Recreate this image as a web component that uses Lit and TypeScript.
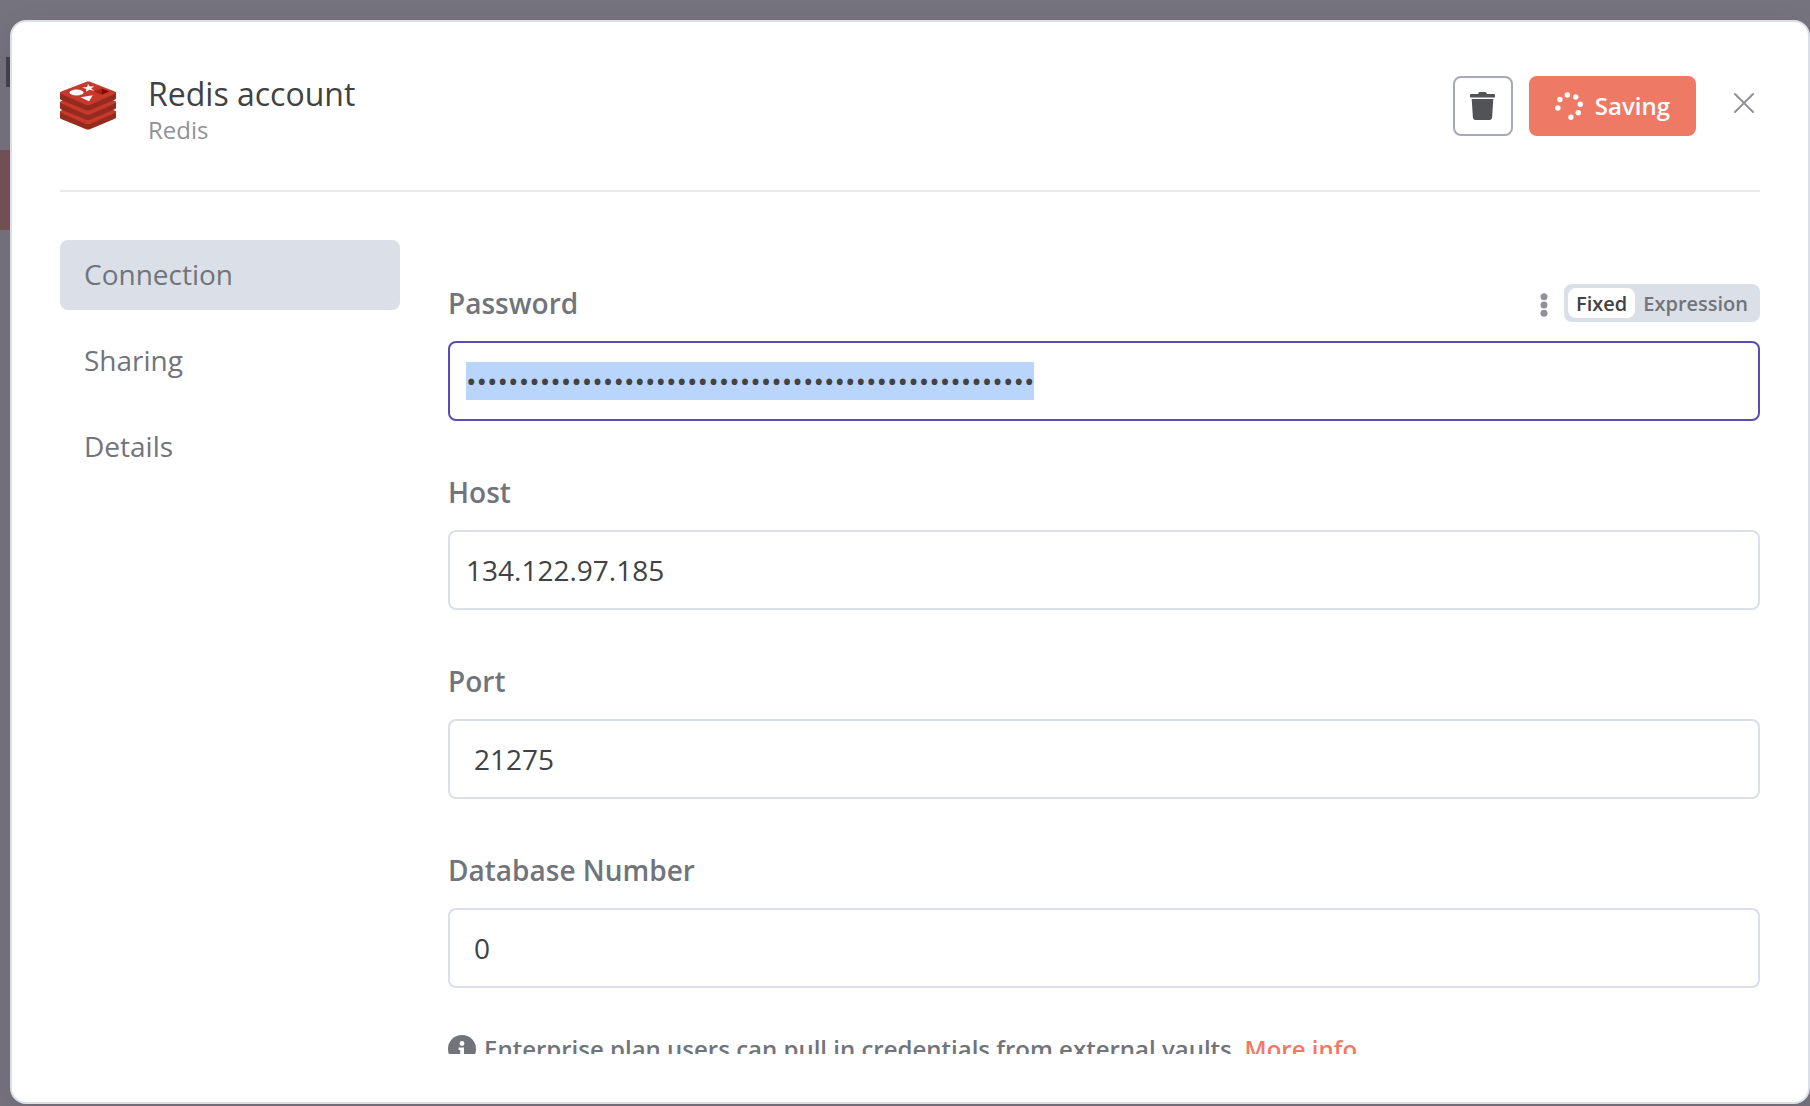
import { LitElement, html, css, svg } from "lit";
import { customElement, state, query } from "lit/decorators.js";

interface Field {
  id: string;
  label: string;
  type: string;
  value: string;
}

const MENU = ["Connection", "Sharing", "Details"];

const FIELDS: Field[] = [
  { id: "host", label: "Host", type: "text", value: "134.122.97.185" },
  { id: "port", label: "Port", type: "number", value: "21275" },
  { id: "database", label: "Database Number", type: "number", value: "0" },
];

const tier = (y: number) => svg`
  <g transform="translate(0 ${y})">
    <path fill="#952a1e" d="M0 11.500v6c0 .8.600 1.200 1.800 1.700L25.500 29c1.600.7 3.400.7 5 0L54.200 19c1.200-.5 1.800-.9 1.800-1.700v-6z"/>
    <path fill="#c6392b" d="M1.800 10.200 26 1c1.500-.6 3-.6 4.600 0L54.200 10.200c2.400 1 2.400 2 0 3L30.500 23.700c-1.700.8-3.300.8-5 0L1.800 13.200c-2.400-1-2.400-2 0-3z"/>
  </g>`;

const redisLogo = html`
  <svg class="logo" viewBox="0 0 56 49" aria-hidden="true">
    ${tier(19)}
    ${tier(9.5)}
    ${tier(0)}
    <ellipse cx="16.500" cy="11.500" rx="7" ry="3" fill="#fff"/>
    <path fill="#fff" d="m28 3 1.800 2.600 4.700-.4-3.400 2 2.800 2.500-4.300-1-3.600 2 .4-2.800-4.200-1.400 4.800-.5z"/>
    <path fill="#fff" d="m20.500 16.300 12.300-2-3.800 6z"/>
    <path fill="#7a0c00" d="m41.500 7.500 7.700 3-7.700 3.200z"/>
    <path fill="#a82115" d="m41.500 7.500-7.700 3 7.700 3.200z"/>
  </svg>`;

const trashIcon = html`
  <svg class="trash" viewBox="0 0 25 28" aria-hidden="true">
    <path fill="currentColor" d="M1 2h7l.6-1.300c.2-.5.600-.7 1.100-.7h5.600c.5 0 .9.200 1.100.7L17 2h7c.600 0 1 .400 1 1v2c0 .300-.200.500-.5.500H.5C.2 5.500 0 5.300 0 5V3c0-.6.400-1 1-1zM1.700 7h21.600l-1.200 18.500c-.1 1.500-1.200 2.500-2.600 2.500h-14c-1.400 0-2.500-1-2.600-2.500z"/>
  </svg>`;

const spinnerIcon = html`
  <svg class="spinner" viewBox="0 0 28 28" fill="currentColor" aria-hidden="true">
    <circle cx="12.300" cy="3" r="2.700"/>
    <circle cx="20.800" cy="5" r="2.700"/>
    <circle cx="25.300" cy="12.300" r="2.700"/>
    <circle cx="23.300" cy="20.800" r="2.700"/>
    <circle cx="15.900" cy="25.300" r="2.700"/>
    <circle cx="2.900" cy="16" r="2.700"/>
    <circle cx="4.900" cy="7.500" r="2.700"/>
  </svg>`;

const closeIcon = html`
  <svg class="cross" viewBox="0 0 20 20" aria-hidden="true">
    <path d="M1 1 19 19M19 1 1 19" stroke="currentColor" stroke-width="2" stroke-linecap="round"/>
  </svg>`;

const dotsIcon = html`
  <svg class="dots" viewBox="0 0 8 24" fill="currentColor" aria-hidden="true">
    <circle cx="4" cy="3.700" r="3.500"/>
    <circle cx="4" cy="12" r="3.500"/>
    <circle cx="4" cy="20.300" r="3.500"/>
  </svg>`;

const infoIcon = html`
  <svg class="info" viewBox="0 0 28 28" aria-hidden="true">
    <circle cx="14" cy="14" r="14" fill="currentColor"/>
    <circle cx="14" cy="8.500" r="2.400" fill="#fff"/>
    <path fill="#fff" d="M10.600 12.500h5.400v6.500h1.600v2.500h-7V19h1.600v-4h-1.600z"/>
  </svg>`;

@customElement("app-root")
export class AppRoot extends LitElement {
  @state() private active = "Connection";
  @state() private mode = "Fixed";
  @query("#password") private password!: HTMLInputElement;

  static styles = css`
    :host {
      display: block;
      font-family: "Open Sans", "Noto Sans", sans-serif;
      color: #414244;
    }
    * {
      box-sizing: border-box;
    }
    button,
    input {
      font: inherit;
      color: inherit;
      margin: 0;
    }
    button {
      cursor: pointer;
      border: 0;
      background: none;
      padding: 0;
    }
    svg {
      display: block;
      flex: none;
    }
    .overlay {
      position: relative;
      display: flex;
      height: 100vh;
      padding: 20px 0 2px 10px;
      background: #75737e;
      overflow: hidden;
    }
    .behind-text {
      position: absolute;
      left: 6px;
      top: 57px;
      width: 6px;
      height: 30px;
      background: #43424b;
    }
    .behind-bar {
      position: absolute;
      left: 0;
      top: 150px;
      width: 12px;
      height: 80px;
      background: #745257;
    }
    .dialog {
      position: relative;
      flex: 1;
      min-width: 0;
      display: flex;
      flex-direction: column;
      padding: 48px;
      border: 2px solid #dbdfe7;
      border-radius: 16px;
      background: #fff;
      box-shadow: 0 12px 32px rgba(68, 28, 23, 0.1);
    }
    .header {
      display: flex;
      align-items: flex-start;
      height: 122px;
      border-bottom: 2px solid #e6e9ef;
    }
    .logo {
      width: 56px;
      height: 49px;
      margin: 11px 32px 0 0;
    }
    .titles {
      flex: 1;
    }
    .title {
      margin: 0;
      font-size: 32px;
      line-height: 48px;
      font-weight: 400;
    }
    .kind {
      margin: 0;
      font-size: 24px;
      line-height: 24px;
      color: #909298;
    }
    .actions {
      display: flex;
      gap: 16px;
      padding-top: 6px;
    }
    .delete {
      display: grid;
      place-items: center;
      width: 60px;
      height: 60px;
      border: 2px solid #a6aab7;
      border-radius: 8px;
      color: #525356;
    }
    .trash {
      width: 25px;
      height: 28px;
    }
    .save {
      display: flex;
      align-items: center;
      gap: 12px;
      height: 60px;
      padding: 0 26px;
      border-radius: 8px;
      background: #ee7a66;
      color: #fff;
      font-size: 24px;
      font-weight: 600;
    }
    .save-text {
      padding-bottom: 2px;
    }
    .spinner {
      width: 28px;
      height: 28px;
    }
    .close {
      margin: 23px 6px 0 38px;
      color: #909298;
    }
    .cross {
      width: 20px;
      height: 20px;
    }
    .body {
      flex: 1;
      min-height: 0;
      display: flex;
      gap: 48px;
      padding-top: 48px;
    }
    .menu {
      flex: 0 0 340px;
      display: flex;
      flex-direction: column;
      gap: 16px;
    }
    .item {
      height: 70px;
      padding: 0 24px 2px;
      border-radius: 8px;
      text-align: left;
      font-size: 28px;
      color: #71747a;
    }
    .item.active {
      background: #dbdfe7;
    }
    .form {
      flex: 1;
      min-width: 0;
      overflow: hidden;
      padding-top: 44px;
    }
    .field + .field {
      margin-top: 52px;
    }
    .field-head {
      display: flex;
      align-items: center;
      height: 38px;
      margin-bottom: 19px;
    }
    .label {
      flex: 1;
      font-size: 28px;
      font-weight: 600;
      color: #71747a;
    }
    .more {
      padding: 4px 12px 0;
      margin-right: 4px;
      color: #909298;
    }
    .dots {
      width: 8px;
      height: 24px;
    }
    .modes {
      display: flex;
      height: 38px;
      padding: 4px;
      border-radius: 8px;
      background: #dbdfe7;
    }
    .mode {
      padding: 2px 8px 0;
      border-radius: 8px;
      font-size: 20px;
      line-height: 28px;
      font-weight: 600;
      color: #71747a;
    }
    .mode.on {
      background: #fff;
      color: #414244;
    }
    .input {
      display: block;
      width: 100%;
      height: 80px;
      padding: 0 16px;
      border: 2px solid #dbdfe7;
      border-radius: 8px;
      outline: none;
      background: #fff;
      font-size: 28px;
      appearance: textfield;
    }
    .input[type="number"] {
      padding-left: 24px;
    }
    .input::-webkit-inner-spin-button {
      display: none;
    }
    .input.secret {
      border-color: #5b4bb8;
    }
    .input::selection {
      background: #b9d5fb;
      color: #414244;
    }
    .note {
      display: flex;
      align-items: center;
      gap: 8px;
      margin-top: 45px;
      font-size: 24px;
      line-height: 32px;
      font-weight: 600;
      color: #71747a;
    }
    .info {
      width: 28px;
      height: 28px;
    }
    .link {
      color: #ee7a66;
      text-decoration: none;
    }
  `;

  firstUpdated() {
    this.password.focus({ preventScroll: true });
    this.password.select();
  }

  render() {
    return html`
      <div class="overlay">
        <div class="behind-text"></div>
        <div class="behind-bar"></div>
        <section class="dialog" role="dialog" aria-labelledby="title">
          <header class="header">
            ${redisLogo}
            <div class="titles">
              <h1 class="title" id="title">Redis account</h1>
              <p class="kind">Redis</p>
            </div>
            <div class="actions">
              <button class="delete" aria-label="Delete">${trashIcon}</button>
              <button class="save">${spinnerIcon}<span class="save-text">Saving</span></button>
            </div>
            <button class="close" aria-label="Close">${closeIcon}</button>
          </header>
          <div class="body">
            <nav class="menu">
              ${MENU.map(
                (name) => html`<button
                  class="item ${name === this.active ? "active" : ""}"
                  @click=${() => (this.active = name)}
                >${name}</button>`
              )}
            </nav>
            <div class="form">
              <div class="field">
                <div class="field-head">
                  <label class="label" for="password">Password</label>
                  <button class="more" aria-label="Options">${dotsIcon}</button>
                  <div class="modes">
                    ${["Fixed", "Expression"].map(
                      (name) => html`<button
                        class="mode ${name === this.mode ? "on" : ""}"
                        @click=${() => (this.mode = name)}
                      >${name}</button>`
                    )}
                  </div>
                </div>
                <input class="input secret" id="password" type="password" .value=${"x".repeat(54)} />
              </div>
              ${FIELDS.map(
                (f) => html`<div class="field">
                  <div class="field-head"><label class="label" for=${f.id}>${f.label}</label></div>
                  <input class="input" id=${f.id} type=${f.type} .value=${f.value} />
                </div>`
              )}
              <div class="note">
                ${infoIcon}
                <span>Enterprise plan users can pull in credentials from external vaults.
                  <a class="link" href="#more">More info</a></span>
              </div>
            </div>
          </div>
        </section>
      </div>
    `;
  }
}
